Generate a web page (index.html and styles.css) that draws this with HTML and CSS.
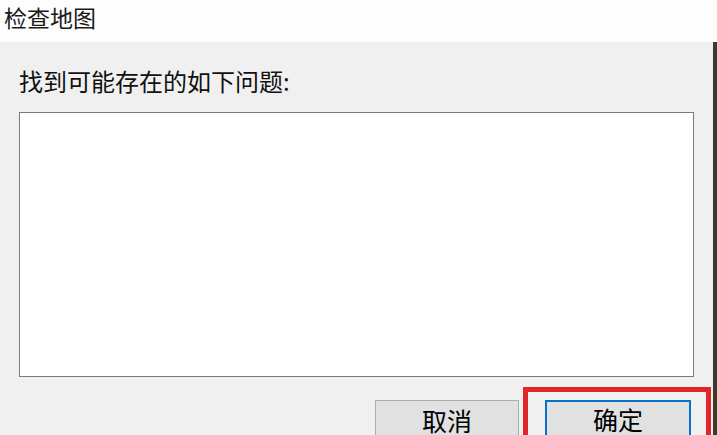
FILE: index.html
```html
<!DOCTYPE html>
<html lang="zh-CN">
<head>
<meta charset="utf-8">
<title>检查地图</title>
<link rel="stylesheet" href="styles.css">
</head>
<body>
<div class="window">
  <div class="titlebar">检查地图</div>
  <div class="main">
    <div class="content">
      <div class="label">找到可能存在的如下问题:</div>
      <div class="listbox"></div>
      <div class="buttons">
        <button class="btn cancel">取消</button>
        <div class="highlight">
          <button class="btn ok">确定</button>
        </div>
      </div>
    </div>
    <div class="edge"></div>
  </div>
</div>
</body>
</html>
```
FILE: styles.css
```css
html, body {
  margin: 0;
  padding: 0;
}
body {
  width: 717px;
  height: 435px;
  overflow: hidden;
  font-family: "Noto Sans CJK SC", "Noto Sans", sans-serif;
  color: #111;
}
.window {
  display: flex;
  flex-direction: column;
  height: 435px;
}
.titlebar {
  flex-shrink: 0;
  height: 42px;
  background: #fdfdfd;
  font-size: 23px;
  line-height: 34px;
  padding-left: 4px;
  color: #1a1a1a;
  box-sizing: border-box;
}
.main {
  flex: 1;
  display: flex;
  background: #f0f0f0;
  overflow: hidden;
}
.content {
  flex: 1;
  padding-left: 19px;
  padding-top: 24px;
  display: flex;
  flex-direction: column;
}
.content > * {
  flex-shrink: 0;
}
.label {
  font-size: 24px;
  line-height: 30px;
  height: 30px;
  color: #111;
}
.listbox {
  margin-top: 16px;
  width: 675px;
  height: 265px;
  box-sizing: border-box;
  border: 1px solid #7a7a7a;
  background: #ffffff;
}
.buttons {
  margin-top: 10px;
  display: flex;
  justify-content: flex-end;
  align-items: flex-start;
  gap: 4px;
  padding-right: 2px;
}
.btn {
  display: block;
  font-family: "Noto Sans CJK SC", "Noto Sans", sans-serif;
  font-size: 25px;
  line-height: 30px;
  padding: 4px 0 20px;
  box-sizing: border-box;
  background: #e1e1e1;
  color: #000;
  text-align: center;
}
.cancel {
  margin-top: 13px;
  width: 144px;
  border: 1px solid #adadad;
}
.highlight {
  width: 188px;
  height: 60px;
  box-sizing: border-box;
  border: 5px solid #e0282c;
  padding: 8px 15px 0 17px;
}
.ok {
  width: 146px;
  border: 2px solid #0a6fc9;
  padding-top: 2px;
}
.edge {
  width: 4px;
  background: #3b3a2c;
}
```
